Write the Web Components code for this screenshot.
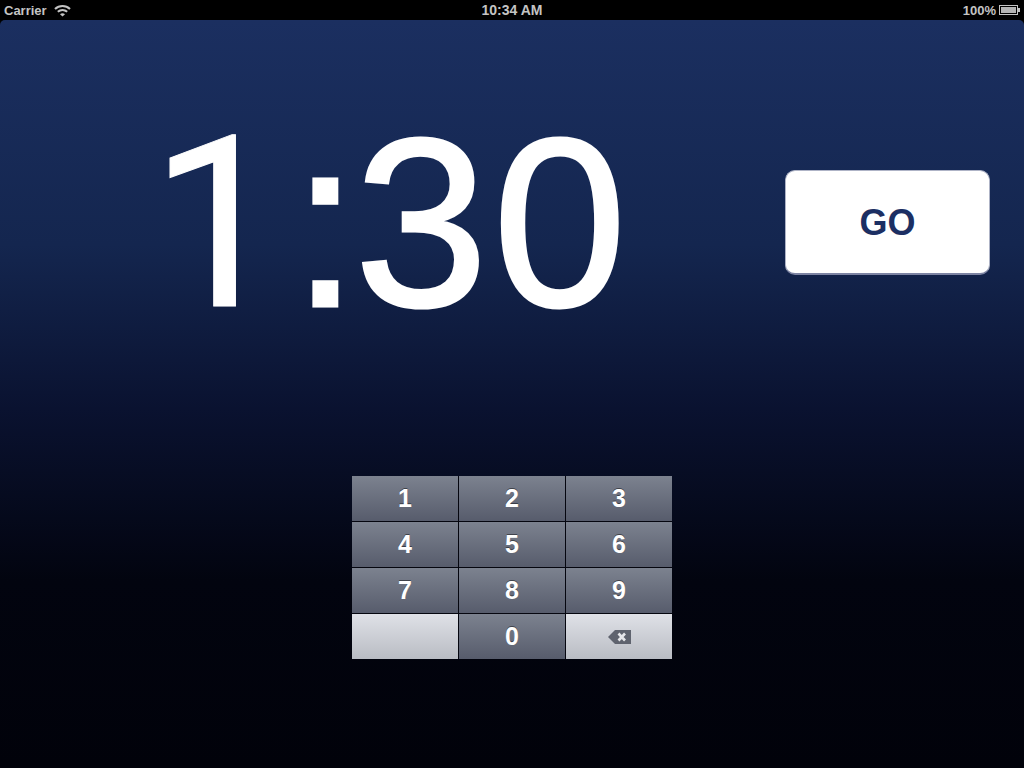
<!DOCTYPE html>
<html>
<head>
<meta charset="utf-8">
<style>
  html, body { margin: 0; padding: 0; width: 1024px; height: 768px; overflow: hidden; background: #000; }
  body { font-family: "Liberation Sans", Arial, sans-serif; }
</style>
</head>
<body>
<timer-app></timer-app>

<script>
class StatusBar extends HTMLElement {
    constructor() {
        super();
        this.attachShadow({ mode: 'open' });
        this.shadowRoot.innerHTML = `
            <style>
                :host {
                    display: grid;
                    grid-template-columns: 1fr auto 1fr;
                    align-items: center;
                    height: 20px;
                    padding: 0 4px;
                    background: #000;
                    color: #c4c4c4;
                    font-size: 13px;
                    font-weight: bold;
                    box-sizing: border-box;
                }
                .left, .right { display: flex; align-items: center; }
                .left { gap: 7px; }
                .right { justify-content: flex-end; gap: 3px; }
                .clock { font-size: 14px; }
                svg { display: block; }
            </style>
            <div class="left">
                <span>Carrier</span>
                <svg width="17" height="13" viewBox="0 0 17 13" fill="none" stroke="#c4c4c4" stroke-width="2.1">
                    <path d="M1 5C5.3 1 11.7 1 16 5"/>
                    <path d="M3.8 7.8C6.6 5.4 10.4 5.4 13.2 7.8"/>
                    <path d="M8.5 12.6 6 10.2C7.4 9 9.6 9 11 10.2Z" fill="#c4c4c4" stroke="none"/>
                </svg>
            </div>
            <span class="clock">10:34 AM</span>
            <div class="right">
                <span>100%</span>
                <svg width="21" height="10" viewBox="0 0 21 10">
                    <rect x=".5" y=".5" width="18" height="9" fill="none" stroke="#c4c4c4"/>
                    <rect x="2" y="2" width="15" height="6" fill="#b4b4b4"/>
                    <rect x="19" y="3" width="2" height="4" fill="#c4c4c4"/>
                </svg>
            </div>
        `;
    }
}

class GoButton extends HTMLElement {
    constructor() {
        super();
        this.attachShadow({ mode: 'open' });
        this.shadowRoot.innerHTML = `
            <style>
                :host {
                    display: flex;
                    align-items: center;
                    justify-content: center;
                    box-sizing: border-box;
                    width: 205px;
                    height: 105px;
                    padding-top: 1px;
                    background: #fff;
                    border: 1px solid #aeb3c6;
                    border-bottom: 2px solid #7d84a3;
                    border-radius: 10px;
                    color: #1c2f63;
                    font-size: 36px;
                    font-weight: bold;
                    cursor: pointer;
                }
            </style>
            <slot></slot>
        `;
    }
}

class KeyPad extends HTMLElement {
    constructor() {
        super();
        this.attachShadow({ mode: 'open' });
        const keys = ['1', '2', '3', '4', '5', '6', '7', '8', '9', '', '0', 'del'];
        this.shadowRoot.innerHTML = `
            <style>
                :host {
                    display: grid;
                    grid-template-columns: repeat(3, 106px);
                    grid-auto-rows: 45px;
                    gap: 1px;
                    width: 320px;
                    background: #05060f;
                }
                .key {
                    display: flex;
                    align-items: center;
                    justify-content: center;
                    background: linear-gradient(#7c828f, #575c6c);
                    color: #fff;
                    font-size: 25px;
                    font-weight: bold;
                    text-shadow: 0 -1px 0 rgba(0, 0, 0, .45);
                }
                .light { background: linear-gradient(#dfe1e7, #b9bcc3); }
            </style>
            ${keys.map(k => {
                if (k === '') return '<div class="key light"></div>';
                if (k === 'del') return `<div class="key light">
                    <svg width="23" height="14" viewBox="0 0 23 14">
                        <path d="M7 0H23V14H7L0 7Z" fill="#5f636e"/>
                        <path d="M10.5 3.5 17 10.5M17 3.5 10.5 10.5" stroke="#e6e7ea" stroke-width="2.6"/>
                    </svg></div>`;
                return `<div class="key">${k}</div>`;
            }).join('')}
        `;
    }
}

class TimerApp extends HTMLElement {
    constructor() {
        super();
        this.attachShadow({ mode: 'open' });
        this.shadowRoot.innerHTML = `
            <style>
                :host {
                    display: flex;
                    flex-direction: column;
                    width: 1024px;
                    height: 768px;
                    background: #000;
                }
                .screen {
                    flex: 1;
                    display: flex;
                    flex-direction: column;
                    border-radius: 5px 5px 0 0;
                    background: linear-gradient(#1b2f60 0, #14264f 30%, #0a1230 52%, #02040f 75%, #01020a 100%);
                }
                .top {
                    height: 456px;
                    display: flex;
                    align-items: flex-start;
                    justify-content: space-between;
                    padding: 0 34px 0 152px;
                    box-sizing: border-box;
                }
                .time {
                    margin-top: 83px;
                    color: #fff;
                    font-size: 240px;
                    line-height: 240px;
                    -webkit-text-stroke: 3px #fff;
                }
                /* Liberation's 1 has a foot, the reference's doesn't */
                .one {
                    margin-left: -2px;
                    font-family: Roboto, sans-serif;
                    line-height: 0;
                    -webkit-text-stroke: 1px #fff;
                }
                .colon { margin: 0 -4px 0 7px; }
                .zero { margin-left: 5px; }
                go-button { margin-top: 150px; }
                key-pad { align-self: center; }
            </style>
            <status-bar></status-bar>
            <div class="screen">
                <div class="top">
                    <div class="time"><span class="one">1</span><span class="colon">:</span><span>3</span><span class="zero">0</span></div>
                    <go-button>GO</go-button>
                </div>
                <key-pad></key-pad>
            </div>
        `;
    }
}

customElements.define('status-bar', StatusBar);
customElements.define('go-button', GoButton);
customElements.define('key-pad', KeyPad);
customElements.define('timer-app', TimerApp);
</script>
</body>
</html>
